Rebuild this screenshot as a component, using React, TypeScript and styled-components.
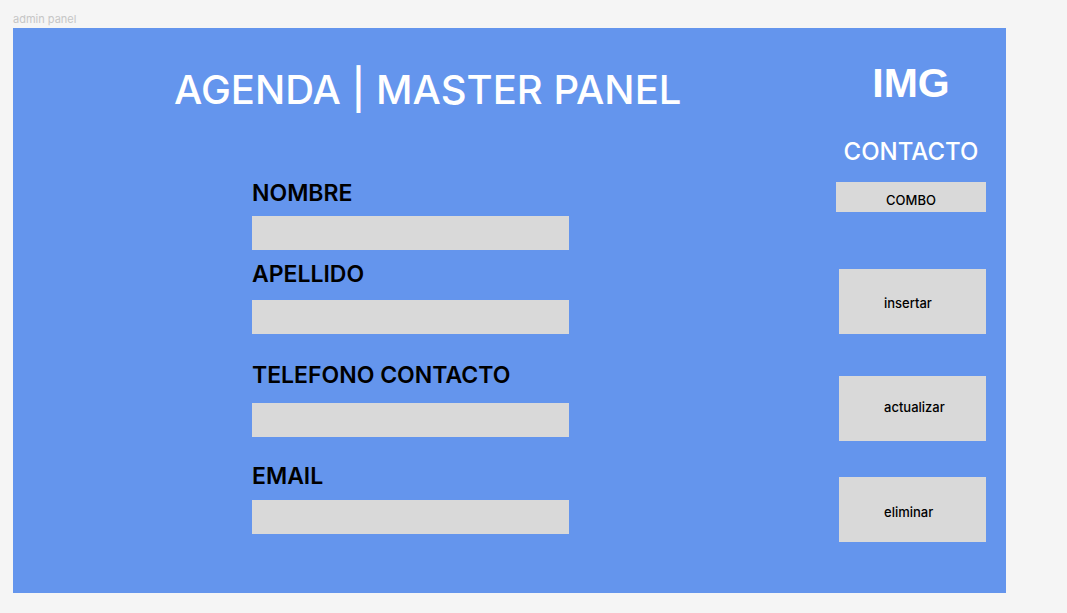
import styled, { createGlobalStyle } from "styled-components";

const GlobalStyle = createGlobalStyle`
  html, body {
    margin: 0;
    padding: 0;
    background: #f5f5f5;
  }
  body {
    font-family: Inter, "Noto Sans", sans-serif;
  }
`;

type FieldType = {
  label: string;
  gap: number;
  inputGap: number;
};

const fields: FieldType[] = [
  { label: "NOMBRE", gap: 65, inputGap: 9 },
  { label: "APELLIDO", gap: 10, inputGap: 12 },
  { label: "TELEFONO CONTACTO", gap: 27, inputGap: 14 },
  { label: "EMAIL", gap: 25, inputGap: 10 },
];

// shift = nudge of the label inside each button
const actions = [
  { text: "insertar", gap: 57, shift: 3 },
  { text: "actualizar", gap: 42, shift: -4 },
  { text: "eliminar", gap: 36, shift: 4 },
];

const App = () => {
  return (
    <Page>
      <GlobalStyle />
      <FrameName>admin panel</FrameName>
      <Frame>
        <Main>
          <Title>AGENDA | MASTER PANEL</Title>
          <Form>
            {fields.map((f) => (
              <Field key={f.label} $gap={f.gap}>
                <Label>{f.label}</Label>
                <Input $gap={f.inputGap} type="text" />
              </Field>
            ))}
          </Form>
        </Main>
        <Side>
          <Logo>IMG</Logo>
          <SideTitle>CONTACTO</SideTitle>
          <Combo>COMBO</Combo>
          {actions.map((a) => (
            <Action key={a.text} $gap={a.gap} $shift={a.shift}>
              {a.text}
            </Action>
          ))}
        </Side>
      </Frame>
    </Page>
  );
};

const Page = styled.div`
  padding: 13px 0 20px 13px;
`;

const FrameName = styled.div`
  font-family: Inter, sans-serif;
  font-size: 11px;
  line-height: 13px;
  color: #c6c6c6;
`;

const Frame = styled.div`
  margin-top: 2px;
  width: 993px;
  height: 565px;
  background: #6495ed;
  display: flex;
  box-sizing: border-box;
`;

const Main = styled.div`
  flex: 1;
  display: flex;
  flex-direction: column;
  padding: 38px 0 0 161px;
`;

const Title = styled.h1`
  margin: 0;
  font-family: Inter, sans-serif;
  font-weight: 500;
  font-size: 40px;
  line-height: 48px;
  color: #ffffff;
  white-space: nowrap;
`;

const Form = styled.div`
  display: flex;
  flex-direction: column;
  margin-left: 78px;
`;

const Field = styled.div<{ $gap: number }>`
  display: flex;
  flex-direction: column;
  margin-top: ${(p) => p.$gap}px;
`;

const Label = styled.label`
  font-family: Inter, sans-serif;
  font-weight: 600;
  font-size: 23px;
  line-height: 28px;
  color: #000000;
`;

const Input = styled.input<{ $gap: number }>`
  margin: ${(p) => p.$gap}px 0 0;
  width: 317px;
  height: 34px;
  padding: 0;
  border: none;
  outline: none;
  background: #d9d9d9;
`;

const Side = styled.div`
  width: 150px;
  margin-right: 20px;
  padding-top: 31px;
  display: flex;
  flex-direction: column;
  align-items: center;
`;

const Logo = styled.div`
  font-family: "Liberation Sans", Arial, sans-serif;
  font-weight: 700;
  font-size: 41px;
  line-height: 48px;
  color: #ffffff;
`;

const SideTitle = styled.div`
  margin-top: 31px;
  font-family: Inter, sans-serif;
  font-weight: 500;
  font-size: 24px;
  line-height: 28px;
  color: #ffffff;
`;

const Combo = styled.div`
  margin-top: 16px;
  width: 150px;
  height: 30px;
  box-sizing: border-box;
  padding-top: 6px;
  display: flex;
  align-items: center;
  justify-content: center;
  background: #d9d9d9;
  font-family: Inter, sans-serif;
  font-weight: 500;
  font-size: 13px;
  color: #000000;
`;

const Action = styled.button<{ $gap: number; $shift: number }>`
  margin-top: ${(p) => p.$gap}px;
  align-self: flex-end;
  width: 147px;
  height: 65px;
  padding: ${(p) => Math.max(p.$shift, 0)}px 0 ${(p) => Math.max(-p.$shift, 0)}px 45px;
  border: none;
  background: #d9d9d9;
  text-align: left;
  font-family: Inter, sans-serif;
  font-weight: 500;
  font-size: 13px;
  color: #000000;
  cursor: pointer;
`;

export default App;
